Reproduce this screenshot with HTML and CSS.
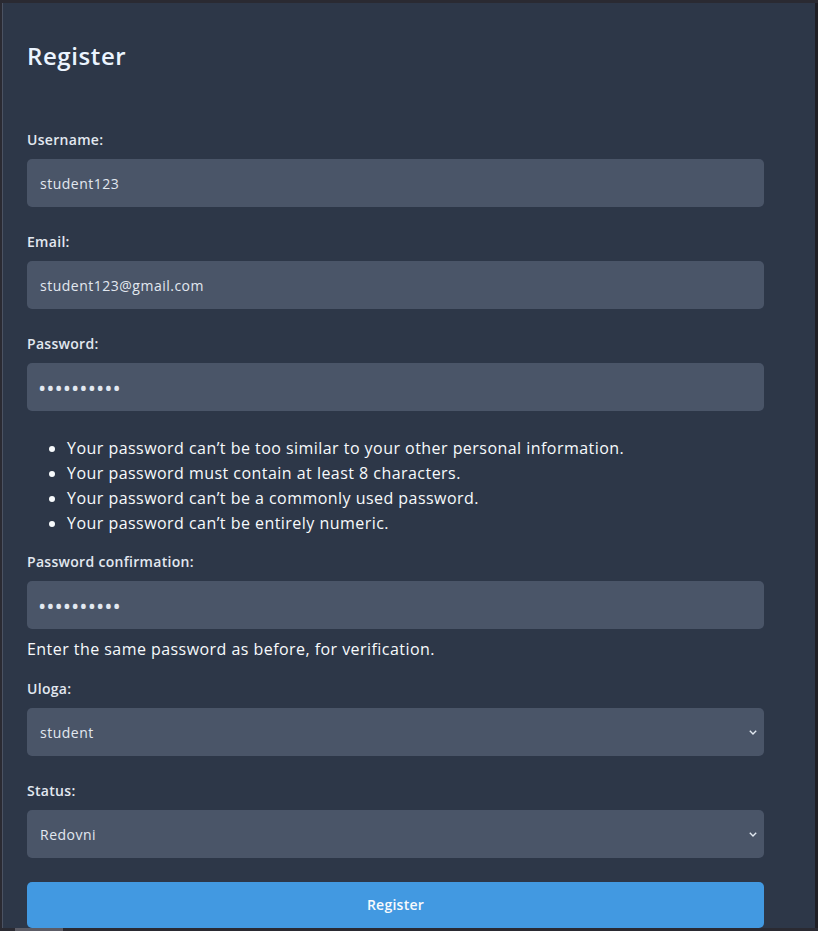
FILE: index.html
```html
<!DOCTYPE html>
<html lang="en">
<head>
<meta charset="utf-8">
<title>Register</title>
<link rel="stylesheet" href="styles.css">
</head>
<body>
<div class="top-strip"></div>
<div class="window">
  <div class="edge-left"></div>
  <main class="panel">
    <h2 class="title">Register</h2>
    <form class="form">
      <div class="field">
        <label class="label" for="username">Username:</label>
        <input class="input" id="username" type="text" value="student123">
      </div>
      <div class="field">
        <label class="label" for="email">Email:</label>
        <input class="input" id="email" type="email" value="student123@gmail.com">
      </div>
      <div class="field field-tight">
        <label class="label" for="password">Password:</label>
        <div class="input input-dots" id="password">••••••••••</div>
      </div>
      <ul class="rules">
        <li>Your password can’t be too similar to your other personal information.</li>
        <li>Your password must contain at least 8 characters.</li>
        <li>Your password can’t be a commonly used password.</li>
        <li>Your password can’t be entirely numeric.</li>
      </ul>
      <div class="field field-tight">
        <label class="label" for="password2">Password confirmation:</label>
        <div class="input input-dots" id="password2">••••••••••</div>
        <p class="help">Enter the same password as before, for verification.</p>
      </div>
      <div class="field">
        <label class="label" for="uloga">Uloga:</label>
        <div class="select-wrap">
          <select class="input select" id="uloga">
            <option>student</option>
          </select>
          <svg class="chevron" width="8" height="5" viewBox="0 0 8 5"><path d="M0.8 0.8 L4 4 L7.2 0.8" fill="none" stroke="#e2e8f0" stroke-width="1.4"/></svg>
        </div>
      </div>
      <div class="field">
        <label class="label" for="status">Status:</label>
        <div class="select-wrap">
          <select class="input select" id="status">
            <option>Redovni</option>
          </select>
          <svg class="chevron" width="8" height="5" viewBox="0 0 8 5"><path d="M0.8 0.8 L4 4 L7.2 0.8" fill="none" stroke="#e2e8f0" stroke-width="1.4"/></svg>
        </div>
      </div>
      <button class="button" type="button">Register</button>
    </form>
  </main>
  <div class="edge-right"></div>
</div>
<div class="bottom-strip"><div class="thumb"></div></div>
</body>
</html>
```
FILE: styles.css
```css
* { box-sizing: border-box; }
html, body {
  margin: 0;
  padding: 0;
  width: 818px;
  height: 931px;
  overflow: hidden;
  background: #2a2a32;
}
body {
  display: flex;
  flex-direction: column;
  font-family: "Open Sans", "Liberation Sans", sans-serif;
  color: #edf2f7;
}
.top-strip { height: 3px; flex: none; background: #2a2a32; }
.window { display: flex; height: 925px; flex: none; }
.edge-left { width: 3px; flex: none; background: #2a2a32; border-right: 1px solid #4b5262; }
.edge-right { width: 3px; flex: none; background: #1f1f25; }
.panel {
  flex: 1;
  background: #2d3748;
  padding: 37px 0 0 24px;
  overflow: hidden;
}
.title {
  margin: 0 0 58px;
  font-size: 24px;
  line-height: 32px;
  font-weight: 600;
  letter-spacing: 0.6px;
  color: #ebf4ff;
}
.form { width: 737px; }
.field { margin-bottom: 25px; }
.field-tight { margin-bottom: 0; }
.label {
  display: block;
  font-size: 14px;
  line-height: 20px;
  font-weight: 600;
  letter-spacing: 0.3px;
  margin-bottom: 9px;
  color: #e2e8f0;
}
.input {
  display: block;
  width: 100%;
  height: 48px;
  border: 0;
  border-radius: 5px;
  background: #4a5568;
  color: #e2e8f0;
  font-family: inherit;
  font-size: 14px;
  letter-spacing: 0.5px;
  padding: 0 13px;
  outline: none;
}
.input-dots {
  display: flex;
  align-items: center;
  font-size: 22px;
  letter-spacing: 0;
  padding-left: 11px;
  padding-bottom: 1px;
}
.rules {
  margin: 25px 0 16px;
  padding-left: 40px;
  font-size: 16px;
  line-height: 25px;
  letter-spacing: 0.46px;
  color: #f7fafc;
}
.help {
  margin: 8px 0 18px;
  font-size: 16px;
  line-height: 24px;
  letter-spacing: 0.45px;
  color: #f7fafc;
}
.select-wrap { position: relative; }
.select { appearance: none; -webkit-appearance: none; }
.chevron { position: absolute; right: 7px; top: 22px; }
.button {
  display: block;
  width: 100%;
  height: 46px;
  margin-top: -1px;
  border: 0;
  border-radius: 5px;
  background: #4299e1;
  color: #f7fafc;
  font-family: inherit;
  font-size: 14px;
  font-weight: 600;
  letter-spacing: 0.25px;
  padding-bottom: 2px;
}
.bottom-strip { height: 3px; flex: none; background: #2a2a32; padding-left: 15px; }
.thumb { width: 48px; height: 3px; background: #5c5c66; }
```
